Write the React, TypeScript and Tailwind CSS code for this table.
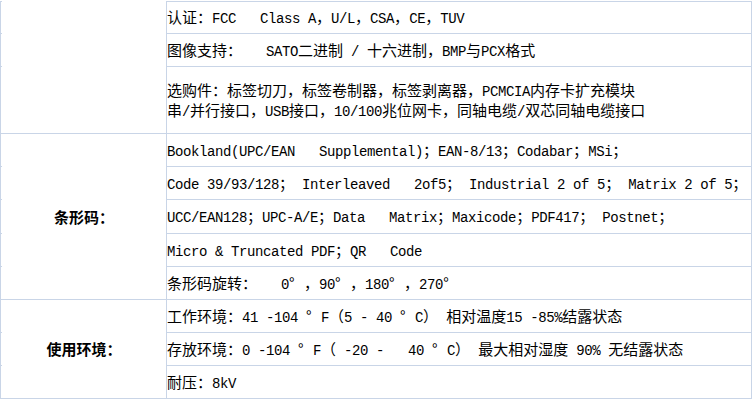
import React from "react";

// splits a line into CJK runs and ascii runs so latin gets the narrow mono font
const Txt = ({ s }: { s: string }) => (
  <>
    {s
      .split(/([\x20-\x7e]+|°)/)
      .filter(Boolean)
      .map((p, i) =>
        p === "°" ? (
          <span key={i} className="inline-block w-[15px]">
            °
          </span>
        ) : /^[\x20-\x7e]+$/.test(p) ? (
          <span key={i} className="font-['Liberation_Mono',monospace] text-[14px] tracking-[-0.4px] whitespace-pre">
            {p}
          </span>
        ) : (
          <span key={i}>{p}</span>
        )
      )}
  </>
);

const rows: { lines: string[]; h: string }[] = [
  { lines: ["认证：FCC   Class A，U/L，CSA，CE，TUV"], h: "row-start-1" },
  { lines: ["图像支持：   SATO二进制 / 十六进制，BMP与PCX格式"], h: "row-start-2" },
  {
    lines: [
      "选购件：标签切刀，标签卷制器，标签剥离器，PCMCIA内存卡扩充模块",
      "串/并行接口，USB接口，10/100兆位网卡，同轴电缆/双芯同轴电缆接口",
    ],
    h: "row-start-3",
  },
  { lines: ["Bookland(UPC/EAN   Supplemental)；EAN-8/13；Codabar；MSi；"], h: "row-start-4" },
  { lines: ["Code 39/93/128； Interleaved   2of5； Industrial 2 of 5； Matrix 2 of 5；"], h: "row-start-5" },
  { lines: ["UCC/EAN128；UPC-A/E；Data   Matrix；Maxicode；PDF417； Postnet；"], h: "row-start-6" },
  { lines: ["Micro & Truncated PDF；QR   Code"], h: "row-start-7" },
  { lines: ["条形码旋转：   0°，90°，180°，270°"], h: "row-start-8" },
  { lines: ["工作环境：41 -104 °F（5 - 40 °C） 相对温度15 -85%结露状态"], h: "row-start-9" },
  { lines: ["存放环境：0 -104 °F（ -20 -   40 °C） 最大相对湿度 90% 无结露状态"], h: "row-start-10" },
  { lines: ["耐压：8kV"], h: "row-start-11" },
];

export default function App() {
  return (
    <div className="w-[753px] h-[400px] bg-white pt-[1px] overflow-hidden text-black font-['Noto_Sans_CJK_SC',sans-serif] text-[15px] leading-[18px]">
      <div className="grid grid-cols-[2px_165px_585px] grid-rows-[33px_33px_67px_33px_33px_34px_33px_33px_33px_33px_33px]">
        {/* left sliver of the cut-off column */}
        {rows.map((r, i) => (
          <div
            key={"s" + i}
            className={`col-start-1 ${r.h} border-l border-b border-[#c9d5e7] ${i === 0 ? "border-t" : ""}`}
          />
        ))}

        {/* labels */}
        <div className="col-start-2 row-start-1 row-span-3 border-r border-b border-[#c9d5e7]" />
        <div className="col-start-2 row-start-4 row-span-5 border-r border-b border-[#c9d5e7] flex items-center justify-center font-bold">
          条形码：
        </div>
        <div className="col-start-2 row-start-9 row-span-3 border-r border-b border-[#c9d5e7] flex items-center justify-center font-bold">
          使用环境：
        </div>

        {/* values */}
        {rows.map((r, i) => (
          <div
            key={"v" + i}
            className={`col-start-3 ${r.h} border-r border-b border-[#c9d5e7] flex flex-col justify-center pt-[1px] ${
              i === 0 ? "border-t" : ""
            }`}
          >
            {r.lines.map((l, j) => (
              <div key={j} className="whitespace-nowrap">
                <Txt s={l} />
              </div>
            ))}
          </div>
        ))}
      </div>
    </div>
  );
}
